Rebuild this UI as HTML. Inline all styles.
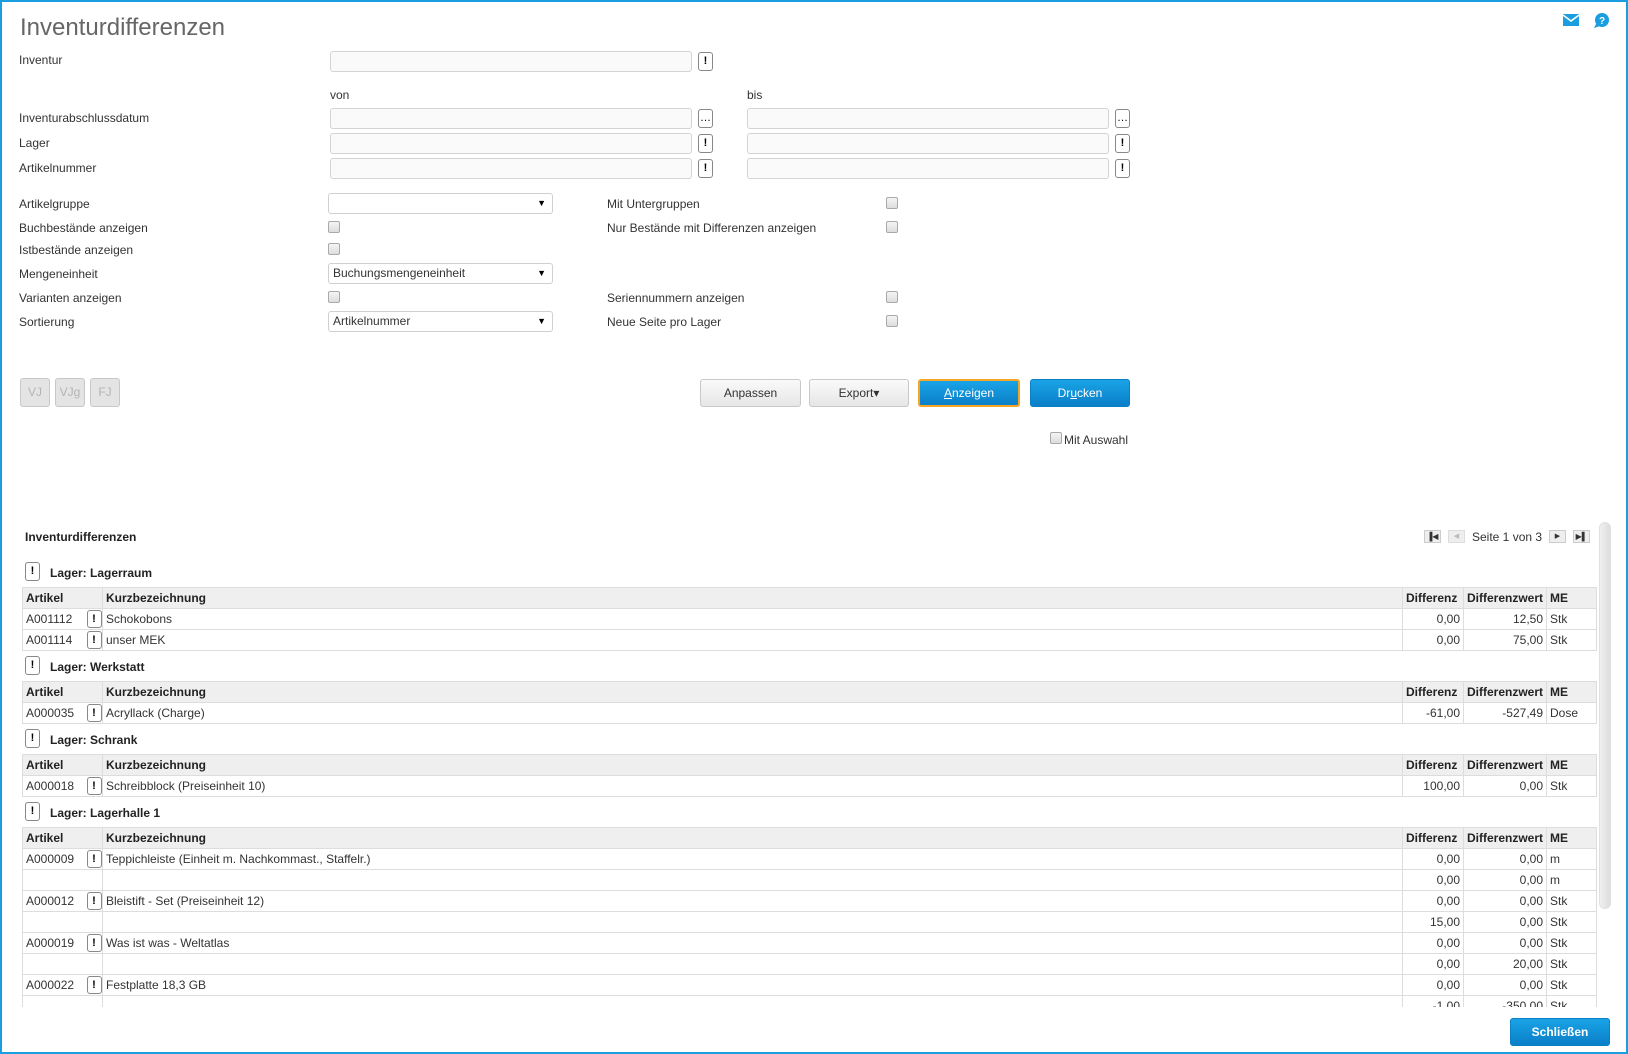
<!DOCTYPE html>
<html><head><meta charset="utf-8"><style>
*{box-sizing:border-box;margin:0;padding:0}
body{width:1628px;height:1054px;overflow:hidden;background:#fff;font-family:"Liberation Sans",Arial,sans-serif;font-size:12px;color:#333;position:relative}
.frame{position:absolute;left:0;top:0;width:1628px;height:1054px;border:2px solid #1a9ee0;border-left-width:2px}
.a{position:absolute}
.lbl{position:absolute;left:19px;line-height:14px}
.inp{position:absolute;height:21px;border:1px solid #d4d4d4;border-radius:3px;background:#fafafa}
.xb{position:absolute;width:15px;height:19px;border:1px solid #888;border-radius:3px;background:#fff;font-weight:bold;font-size:11px;text-align:center;line-height:17px;color:#000}
.sel{position:absolute;left:328px;width:225px;height:21px;border:1px solid #d0d0d0;border-radius:3px;background:#fff;padding-left:4px;line-height:19px}
.sel:after{content:"▼";position:absolute;right:6px;top:0;font-size:9px;color:#000}
.cb{position:absolute;width:12px;height:12px;border:1px solid #aaa;border-radius:2px;background:linear-gradient(#f4f4f4,#ddd)}
.btn{position:absolute;top:379px;height:28px;border-radius:3px;text-align:center;line-height:26px;font-size:12px}
.g{border:1px solid #c8c8c8;background:linear-gradient(#fafafa,#e6e6e6);color:#333}
.b{background:linear-gradient(#1aa3e6,#0a7fc8);color:#fff;border:1px solid #0a7fc8}
.dis{position:absolute;top:378px;width:30px;height:29px;border:1px solid #c8c8c8;border-radius:3px;background:#e4e4e4;color:#b4b4b4;text-align:center;line-height:27px;font-size:12px}
table{border-collapse:collapse;width:1575px;table-layout:fixed}
td{height:21px;border:1px solid #ddd;padding:0 3px;white-space:nowrap;overflow:hidden;line-height:19px}
tr.h td{background:#efefef;font-weight:bold;color:#222}
td.r{text-align:right}
td.c1{border-right:none}
td.c2{border-left:none;padding:0;position:relative}
.gt{height:30px;position:relative;font-weight:bold;color:#222}
.gt .xb{left:3px;top:5px}
.gt span{position:absolute;left:28px;top:9px}
.ix{position:absolute;left:6px;top:1px;width:15px;height:18px;line-height:16px}
</style></head><body>
<div class="frame"></div>
<div class="a" style="left:20px;top:14px;font-size:24px;color:#666;">Inventurdifferenzen</div>
<svg class="a" style="left:1563px;top:14px" width="16" height="12" viewBox="0 0 16 12"><rect width="16" height="12" fill="#1a9ee0"/><path d="M0 1 L8 7 L16 1" stroke="#fff" stroke-width="1.5" fill="none"/></svg>
<svg class="a" style="left:1593px;top:13px" width="16" height="16" viewBox="0 0 16 16"><circle cx="9" cy="7" r="7" fill="#1a9ee0"/><path d="M3 11 L1 15 L7 13z" fill="#1a9ee0"/><text x="9" y="11" font-size="10" font-weight="bold" fill="#fff" text-anchor="middle" font-family="Liberation Sans">?</text></svg>

<div class="lbl" style="top:53px">Inventur</div>
<div class="inp" style="left:330px;top:51px;width:362px"></div><div class="xb" style="left:698px;top:52px">!</div>
<div class="a" style="left:330px;top:88px">von</div>
<div class="a" style="left:747px;top:88px">bis</div>
<div class="lbl" style="top:111px">Inventurabschlussdatum</div>
<div class="lbl" style="top:136px">Lager</div>
<div class="lbl" style="top:161px">Artikelnummer</div>
<div class="inp" style="left:330px;top:108px;width:362px"></div><div class="xb" style="left:698px;top:109px;font-weight:normal">…</div>
<div class="inp" style="left:330px;top:133px;width:362px"></div><div class="xb" style="left:698px;top:134px">!</div>
<div class="inp" style="left:330px;top:158px;width:362px"></div><div class="xb" style="left:698px;top:159px">!</div>
<div class="inp" style="left:747px;top:108px;width:362px"></div><div class="xb" style="left:1115px;top:109px;font-weight:normal">…</div>
<div class="inp" style="left:747px;top:133px;width:362px"></div><div class="xb" style="left:1115px;top:134px">!</div>
<div class="inp" style="left:747px;top:158px;width:362px"></div><div class="xb" style="left:1115px;top:159px">!</div>

<div class="lbl" style="top:197px">Artikelgruppe</div><div class="sel" style="top:193px"></div>
<div class="lbl" style="top:221px">Buchbestände anzeigen</div><div class="cb" style="left:328px;top:221px"></div>
<div class="lbl" style="top:243px">Istbestände anzeigen</div><div class="cb" style="left:328px;top:243px"></div>
<div class="lbl" style="top:267px">Mengeneinheit</div><div class="sel" style="top:263px">Buchungsmengeneinheit</div>
<div class="lbl" style="top:291px">Varianten anzeigen</div><div class="cb" style="left:328px;top:291px"></div>
<div class="lbl" style="top:315px">Sortierung</div><div class="sel" style="top:311px">Artikelnummer</div>

<div class="a" style="left:607px;top:197px">Mit Untergruppen</div><div class="cb" style="left:886px;top:197px"></div>
<div class="a" style="left:607px;top:221px">Nur Bestände mit Differenzen anzeigen</div><div class="cb" style="left:886px;top:221px"></div>
<div class="a" style="left:607px;top:291px">Seriennummern anzeigen</div><div class="cb" style="left:886px;top:291px"></div>
<div class="a" style="left:607px;top:315px">Neue Seite pro Lager</div><div class="cb" style="left:886px;top:315px"></div>

<div class="dis" style="left:20px">VJ</div><div class="dis" style="left:55px">VJg</div><div class="dis" style="left:90px">FJ</div>
<div class="btn g" style="left:700px;width:101px">Anpassen</div>
<div class="btn g" style="left:809px;width:100px">Export▾</div>
<div class="btn b" style="left:918px;width:102px;border:2px solid #f5a623;line-height:24px"><u>A</u>nzeigen</div>
<div class="btn b" style="left:1030px;width:100px">Dr<u>u</u>cken</div>
<div class="cb" style="left:1050px;top:432px"></div><div class="a" style="left:1064px;top:433px">Mit Auswahl</div>

<div class="a" style="left:25px;top:530px;font-weight:bold;color:#222">Inventurdifferenzen</div>
<div class="a" style="left:1424px;top:530px;width:17px;height:13px;border:1px solid #ccc;background:#eee;font-size:8px;text-align:center;line-height:11px;color:#333">▐◀</div>
<div class="a" style="left:1448px;top:530px;width:17px;height:13px;border:1px solid #ddd;background:#eee;font-size:7px;text-align:center;line-height:11px;color:#bbb">◀</div>
<div class="a" style="left:1472px;top:530px">Seite 1 von 3</div>
<div class="a" style="left:1549px;top:530px;width:17px;height:13px;border:1px solid #ccc;background:#eee;font-size:7px;text-align:center;line-height:11px;color:#333">▶</div>
<div class="a" style="left:1573px;top:530px;width:17px;height:13px;border:1px solid #ccc;background:#eee;font-size:8px;text-align:center;line-height:11px;color:#333">▶▌</div>
<div class="a" style="left:1599px;top:522px;width:12px;height:387px;border-radius:6px;background:linear-gradient(90deg,#f0f0f0,#ddd);border:1px solid #e0e0e0"></div>

<div class="a" style="left:22px;top:557px;height:450px;overflow:hidden;width:1576px">
<div class="gt"><div class="xb">!</div><span>Lager: Lagerraum</span></div>
<table><colgroup><col style="width:58px"><col style="width:22px"><col><col style="width:61px"><col style="width:83px"><col style="width:50px"></colgroup>
<tr class="h"><td class="c1">Artikel</td><td class="c2"></td><td>Kurzbezeichnung</td><td>Differenz</td><td>Differenzwert</td><td>ME</td></tr>
<tr><td class="c1">A001112</td><td class="c2"><div class="xb ix">!</div></td><td>Schokobons</td><td class="r">0,00</td><td class="r">12,50</td><td>Stk</td></tr>
<tr><td class="c1">A001114</td><td class="c2"><div class="xb ix">!</div></td><td>unser MEK</td><td class="r">0,00</td><td class="r">75,00</td><td>Stk</td></tr>
</table>
<div class="gt"><div class="xb">!</div><span>Lager: Werkstatt</span></div>
<table><colgroup><col style="width:58px"><col style="width:22px"><col><col style="width:61px"><col style="width:83px"><col style="width:50px"></colgroup>
<tr class="h"><td class="c1">Artikel</td><td class="c2"></td><td>Kurzbezeichnung</td><td>Differenz</td><td>Differenzwert</td><td>ME</td></tr>
<tr><td class="c1">A000035</td><td class="c2"><div class="xb ix">!</div></td><td>Acryllack (Charge)</td><td class="r">-61,00</td><td class="r">-527,49</td><td>Dose</td></tr>
</table>
<div class="gt"><div class="xb">!</div><span>Lager: Schrank</span></div>
<table><colgroup><col style="width:58px"><col style="width:22px"><col><col style="width:61px"><col style="width:83px"><col style="width:50px"></colgroup>
<tr class="h"><td class="c1">Artikel</td><td class="c2"></td><td>Kurzbezeichnung</td><td>Differenz</td><td>Differenzwert</td><td>ME</td></tr>
<tr><td class="c1">A000018</td><td class="c2"><div class="xb ix">!</div></td><td>Schreibblock (Preiseinheit 10)</td><td class="r">100,00</td><td class="r">0,00</td><td>Stk</td></tr>
</table>
<div class="gt"><div class="xb">!</div><span>Lager: Lagerhalle 1</span></div>
<table><colgroup><col style="width:58px"><col style="width:22px"><col><col style="width:61px"><col style="width:83px"><col style="width:50px"></colgroup>
<tr class="h"><td class="c1">Artikel</td><td class="c2"></td><td>Kurzbezeichnung</td><td>Differenz</td><td>Differenzwert</td><td>ME</td></tr>
<tr><td class="c1">A000009</td><td class="c2"><div class="xb ix">!</div></td><td>Teppichleiste (Einheit m. Nachkommast., Staffelr.)</td><td class="r">0,00</td><td class="r">0,00</td><td>m</td></tr>
<tr><td class="c1"></td><td class="c2"></td><td></td><td class="r">0,00</td><td class="r">0,00</td><td>m</td></tr>
<tr><td class="c1">A000012</td><td class="c2"><div class="xb ix">!</div></td><td>Bleistift - Set (Preiseinheit 12)</td><td class="r">0,00</td><td class="r">0,00</td><td>Stk</td></tr>
<tr><td class="c1"></td><td class="c2"></td><td></td><td class="r">15,00</td><td class="r">0,00</td><td>Stk</td></tr>
<tr><td class="c1">A000019</td><td class="c2"><div class="xb ix">!</div></td><td>Was ist was - Weltatlas</td><td class="r">0,00</td><td class="r">0,00</td><td>Stk</td></tr>
<tr><td class="c1"></td><td class="c2"></td><td></td><td class="r">0,00</td><td class="r">20,00</td><td>Stk</td></tr>
<tr><td class="c1">A000022</td><td class="c2"><div class="xb ix">!</div></td><td>Festplatte 18,3 GB</td><td class="r">0,00</td><td class="r">0,00</td><td>Stk</td></tr>
<tr><td class="c1"></td><td class="c2"></td><td></td><td class="r">-1,00</td><td class="r">-350,00</td><td>Stk</td></tr>
</table>
</div>

<div class="btn b" style="left:1510px;top:1018px;width:100px;height:28px;font-weight:bold">Schließen</div>
</body></html>
